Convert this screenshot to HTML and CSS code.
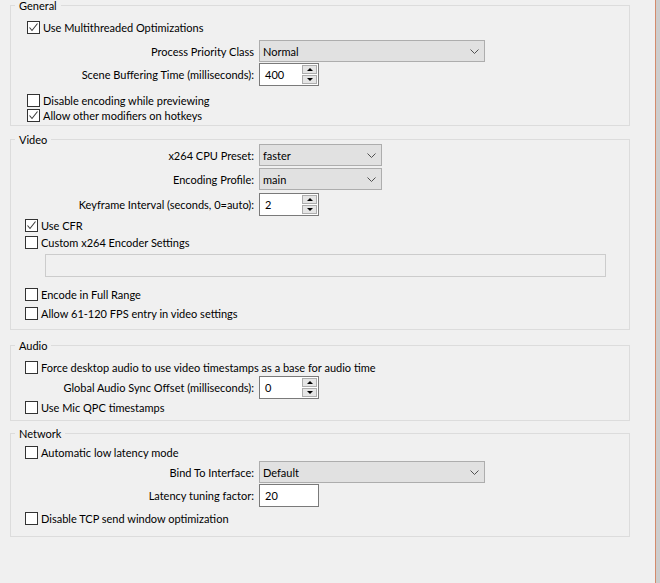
FILE: index.html
```html
<!DOCTYPE html>
<html>
<head>
<meta charset="utf-8">
<link rel="stylesheet" href="styles.css">
</head>
<body>
<div class="window">
  <div class="main">
    <section class="group g-general">
      <div class="title">General</div>
      <div class="row cbrow mt14"><span class="cb on"><svg width="11" height="11" viewBox="0 0 11 11"><polyline points="1.5,5.5 4,8.5 9.5,1.5" fill="none" stroke="#3c3c3c" stroke-width="1.1"/></svg></span><span class="txt">Use Multithreaded Optimizations</span></div>
      <div class="row frow mt5"><span class="flabel">Process Priority Class</span><div class="combo wide"><span class="ctext">Normal</span><svg class="chev" width="9" height="5" viewBox="0 0 9 5"><polyline points="0.5,0.5 4.5,4.5 8.5,0.5" fill="none" stroke="#505050" stroke-width="1"/></svg></div></div>
      <div class="row frow mt1 h23"><span class="flabel">Scene Buffering Time (milliseconds):</span><div class="spin"><span class="stext">400</span><span class="sbtns"><span class="sbtn"><i class="up"></i></span><span class="sbtn"><i class="down"></i></span></span></div></div>
      <div class="row cbrow mt7"><span class="cb"></span><span class="txt">Disable encoding while previewing</span></div>
      <div class="row cbrow"><span class="cb on"><svg width="11" height="11" viewBox="0 0 11 11"><polyline points="1.5,5.5 4,8.5 9.5,1.5" fill="none" stroke="#3c3c3c" stroke-width="1.1"/></svg></span><span class="txt">Allow other modifiers on hotkeys</span></div>
    </section>

    <section class="group g-video">
      <div class="title">Video</div>
      <div class="row frow mt4"><span class="flabel">x264 CPU Preset:</span><div class="combo narrow"><span class="ctext">faster</span><svg class="chev" width="9" height="5" viewBox="0 0 9 5"><polyline points="0.5,0.5 4.5,4.5 8.5,0.5" fill="none" stroke="#505050" stroke-width="1"/></svg></div></div>
      <div class="row frow mt2"><span class="flabel">Encoding Profile:</span><div class="combo narrow"><span class="ctext">main</span><svg class="chev" width="9" height="5" viewBox="0 0 9 5"><polyline points="0.5,0.5 4.5,4.5 8.5,0.5" fill="none" stroke="#505050" stroke-width="1"/></svg></div></div>
      <div class="row frow mt3 h23"><span class="flabel">Keyframe Interval (seconds, 0=auto):</span><div class="spin"><span class="stext">2</span><span class="sbtns"><span class="sbtn"><i class="up"></i></span><span class="sbtn"><i class="down"></i></span></span></div></div>
      <div class="row cbrow mt2"><span class="cb on"><svg width="11" height="11" viewBox="0 0 11 11"><polyline points="1.5,5.5 4,8.5 9.5,1.5" fill="none" stroke="#3c3c3c" stroke-width="1.1"/></svg></span><span class="txt">Use CFR</span></div>
      <div class="row cbrow mt2"><span class="cb"></span><span class="txt">Custom x264 Encoder Settings</span></div>
      <div class="row mt4"><div class="disabled-edit"></div></div>
      <div class="row cbrow mt10"><span class="cb"></span><span class="txt">Encode in Full Range</span></div>
      <div class="row cbrow mt4"><span class="cb"></span><span class="txt">Allow 61-120 FPS entry in video settings</span></div>
    </section>

    <section class="group g-audio">
      <div class="title">Audio</div>
      <div class="row cbrow mt14"><span class="cb"></span><span class="txt">Force desktop audio to use video timestamps as a base for audio time</span></div>
      <div class="row frow mt1 h23"><span class="flabel">Global Audio Sync Offset (milliseconds):</span><div class="spin"><span class="stext">0</span><span class="sbtns"><span class="sbtn"><i class="up"></i></span><span class="sbtn"><i class="down"></i></span></span></div></div>
      <div class="row cbrow mt1"><span class="cb"></span><span class="txt">Use Mic QPC timestamps</span></div>
    </section>

    <section class="group g-network">
      <div class="title">Network</div>
      <div class="row cbrow mt11"><span class="cb"></span><span class="txt">Automatic low latency mode</span></div>
      <div class="row frow mt1"><span class="flabel">Bind To Interface:</span><div class="combo wide"><span class="ctext">Default</span><svg class="chev" width="9" height="5" viewBox="0 0 9 5"><polyline points="0.5,0.5 4.5,4.5 8.5,0.5" fill="none" stroke="#505050" stroke-width="1"/></svg></div></div>
      <div class="row frow mt1 h23"><span class="flabel">Latency tuning factor:</span><div class="ledit"><span class="stext">20</span></div></div>
      <div class="row cbrow mt4"><span class="cb"></span><span class="txt">Disable TCP send window optimization</span></div>
    </section>
  </div>
  <div class="edge"></div>
  <div class="strip"></div>
</div>
</body>
</html>
```

FILE: styles.css
```css
html, body {
  margin: 0;
  padding: 0;
  background: #f0f0f0;
  width: 660px;
  height: 583px;
  overflow: hidden;
}

.window {
  display: flex;
  width: 660px;
  height: 583px;
  font-family: Lato, "Liberation Sans", sans-serif;
  font-size: 11px;
  color: #000;
}

.main {
  width: 655px;
  flex: none;
  padding-top: 5px;
  box-sizing: border-box;
}

.edge {
  width: 1px;
  flex: none;
  background: #d38b6c;
}

.strip {
  flex: 1;
  background: #cdcdcd;
}

.group {
  box-sizing: border-box;
  width: 620px;
  margin-left: 10px;
  border: 1px solid #dcdcdc;
  display: flex;
  flex-direction: column;
}

.g-general { height: 121px; }
.g-general .cbrow { padding-left: 16px; }
.g-video { height: 191px; margin-top: 13px; }
.g-audio { height: 76px; margin-top: 15px; }
.g-network { height: 104px; margin-top: 12px; }

.title {
  align-self: flex-start;
  height: 12px;
  line-height: 12px;
  margin: -6px 0 -6px 4px;
  padding: 0 4px;
  background: #f0f0f0;
}

.row {
  display: flex;
  align-items: center;
  flex: none;
}

.cbrow {
  height: 15px;
  line-height: 15px;
  padding-left: 14px;
}

.frow { height: 22px; }
.h23 { height: 23px; }

.mt1 { margin-top: 1px; }
.mt2 { margin-top: 2px; }
.mt3 { margin-top: 3px; }
.mt4 { margin-top: 4px; }
.mt5 { margin-top: 5px; }
.mt7 { margin-top: 7px; }
.mt10 { margin-top: 10px; }
.mt11 { margin-top: 11px; }
.mt14 { margin-top: 14px; }

.cb {
  box-sizing: border-box;
  width: 13px;
  height: 13px;
  border: 1px solid #333;
  background: #fff;
  flex: none;
  display: flex;
  align-items: center;
  justify-content: center;
}

.cb svg { display: block; }

.txt {
  margin-left: 3px;
  white-space: nowrap;
}

.flabel {
  width: 243px;
  margin-right: 5px;
  text-align: right;
  white-space: nowrap;
  flex: none;
}

.combo {
  box-sizing: border-box;
  height: 22px;
  border: 1px solid #adadad;
  background: #e1e1e1;
  display: flex;
  align-items: center;
  justify-content: space-between;
  padding: 0 5px 0 3px;
}

.combo.wide { width: 226px; }
.combo.narrow { width: 123px; }

.chev { display: block; }

.spin, .ledit {
  box-sizing: border-box;
  width: 60px;
  height: 23px;
  border: 1px solid #7a7a7a;
  background: #fff;
  display: flex;
  align-items: stretch;
}

.stext {
  flex: 1;
  display: flex;
  align-items: center;
  padding-left: 5px;
}

.sbtns {
  width: 16px;
  display: flex;
  flex-direction: column;
  justify-content: space-between;
  padding: 1px 1px 1px 0;
  box-sizing: border-box;
}

.sbtn {
  box-sizing: border-box;
  height: 9px;
  border: 1px solid #adadad;
  background: #e5e5e5;
  display: flex;
  align-items: center;
  justify-content: center;
}

.up {
  width: 0;
  height: 0;
  border-left: 3px solid transparent;
  border-right: 3px solid transparent;
  border-bottom: 3px solid #000;
}

.down {
  width: 0;
  height: 0;
  border-left: 3px solid transparent;
  border-right: 3px solid transparent;
  border-top: 3px solid #000;
}

.disabled-edit {
  box-sizing: border-box;
  width: 561px;
  height: 23px;
  margin-left: 34px;
  border: 1px solid #cccccc;
  background: #f0f0f0;
}
```
